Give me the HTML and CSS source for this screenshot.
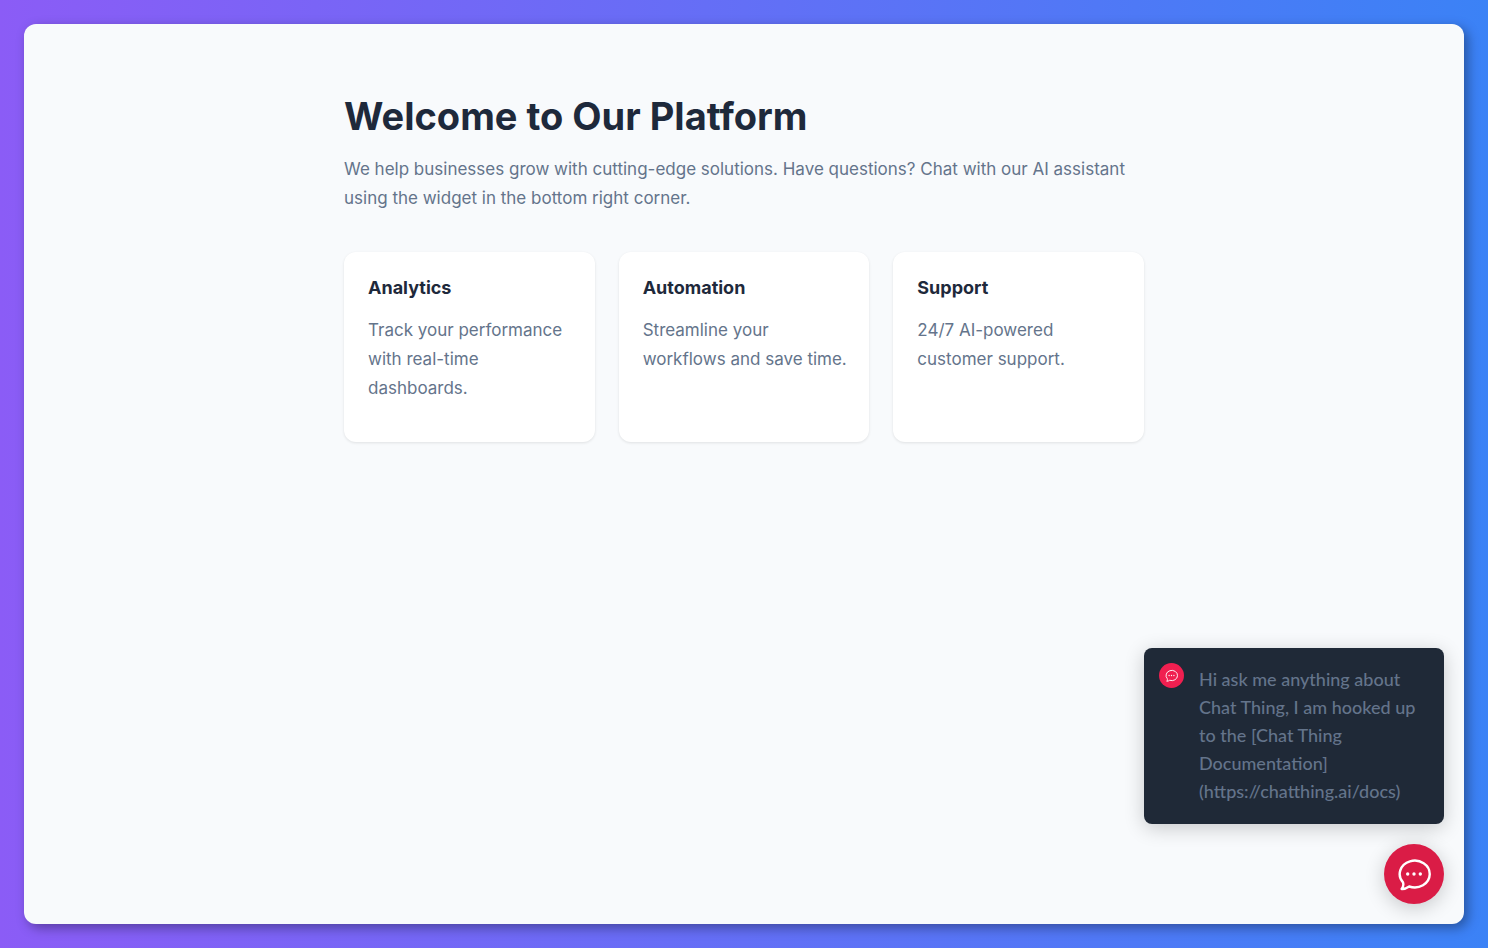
FILE: index.html
```
<!DOCTYPE html>
<html lang="en">
<head>
<meta charset="utf-8">
<title>Welcome to Our Platform</title>
<link rel="stylesheet" href="styles.css">
</head>
<body>
<div class="window">
  <main class="content">
    <h1 class="title">Welcome to Our Platform</h1>
    <p class="lead">We help businesses grow with cutting-edge solutions. Have questions? Chat with our AI assistant using the widget in the bottom right corner.</p>
    <section class="cards">
      <article class="card"><h2 class="card-title">Analytics</h2><p class="card-text">Track your performance with real-time dashboards.</p></article>
      <article class="card"><h2 class="card-title">Automation</h2><p class="card-text">Streamline your workflows and save time.</p></article>
      <article class="card"><h2 class="card-title">Support</h2><p class="card-text">24/7 AI-powered customer support.</p></article>
    </section>
  </main>
  <aside class="chat">
    <div class="message">
      <span class="avatar"><svg class="avatar-icon" viewBox="0 0 34 34"><use href="#bubble"/></svg></span>
      <p class="message-text">Hi ask me anything about Chat Thing, I am hooked up to the [Chat Thing Documentation]<wbr>(https://chatthing.ai/docs)</p>
    </div>
    <button class="launcher" type="button" aria-label="Open chat">
      <svg class="launcher-icon" viewBox="0 0 34 34">
        <g id="bubble">
          <path d="M6 25.400A15 13.400 0 1 1 12.200 29.500C10 31 7.600 32.200 4.600 32C6.400 29.800 6.700 27.600 6 25.400Z" fill="none" stroke="#fff" stroke-width="2.4" stroke-linejoin="round"/>
          <g fill="#fff"><circle cx="10.700" cy="17" r="1.7"/><circle cx="17" cy="17" r="1.7"/><circle cx="23.300" cy="17" r="1.7"/></g>
        </g>
      </svg>
    </button>
  </aside>
</div>
</body>
</html>
```
FILE: styles.css
```
* { box-sizing: border-box; }
body {
  margin: 0;
  min-height: 100vh;
  padding: 24px;
  display: flex;
  background: linear-gradient(to right, #8b5cf6, #3b82f6);
  font-family: Inter, sans-serif;
  color: #1e293b;
}
.window {
  position: relative;
  flex: 1;
  padding: 64px 24px;
  border-radius: 12px;
  background: #f8fafc;
  box-shadow: 4px 4px 12px rgba(0, 0, 0, 0.35);
}
.content { max-width: 800px; margin: 0 auto; }
.title { margin: 0; font-size: 38px; line-height: 56px; font-weight: 700; }
.lead { margin: 11px 0 39px; font-size: 17px; line-height: 29px; color: #64748b; }
.cards { display: grid; grid-template-columns: repeat(3, 1fr); gap: 24px; }
.card { padding: 24px 16px 39px 24px; border-radius: 12px; background: #fff; box-shadow: 0 1px 3px rgba(0, 0, 0, 0.1); }
.card-title { margin: 0; font-size: 18px; line-height: 24px; font-weight: 700; }
.card-text { margin: 16px 0 0; font-size: 17px; line-height: 29px; color: #64748b; }
.chat { position: absolute; right: 20px; bottom: 20px; display: flex; flex-direction: column; align-items: flex-end; gap: 20px; }
.message { display: flex; gap: 15px; width: 300px; padding: 15px; border-radius: 8px; background: #1f2937; box-shadow: 0 4px 20px rgba(0, 0, 0, 0.2); }
.avatar { flex: none; display: grid; place-items: center; width: 25px; height: 25px; border-radius: 50%; background: #f01f50; }
.avatar-icon { width: 13px; height: 13px; }
.message-text { margin: 2px 0 4px; font-family: Lato, sans-serif; font-size: 18px; line-height: 28px; font-weight: 500; color: #64748b; }
.launcher { display: grid; place-items: center; width: 60px; height: 60px; padding: 0; border: 0; border-radius: 50%; background: #da1c46; box-shadow: 0 4px 20px rgba(0, 0, 0, 0.2); }
.launcher-icon { width: 34px; height: 34px; }
```
